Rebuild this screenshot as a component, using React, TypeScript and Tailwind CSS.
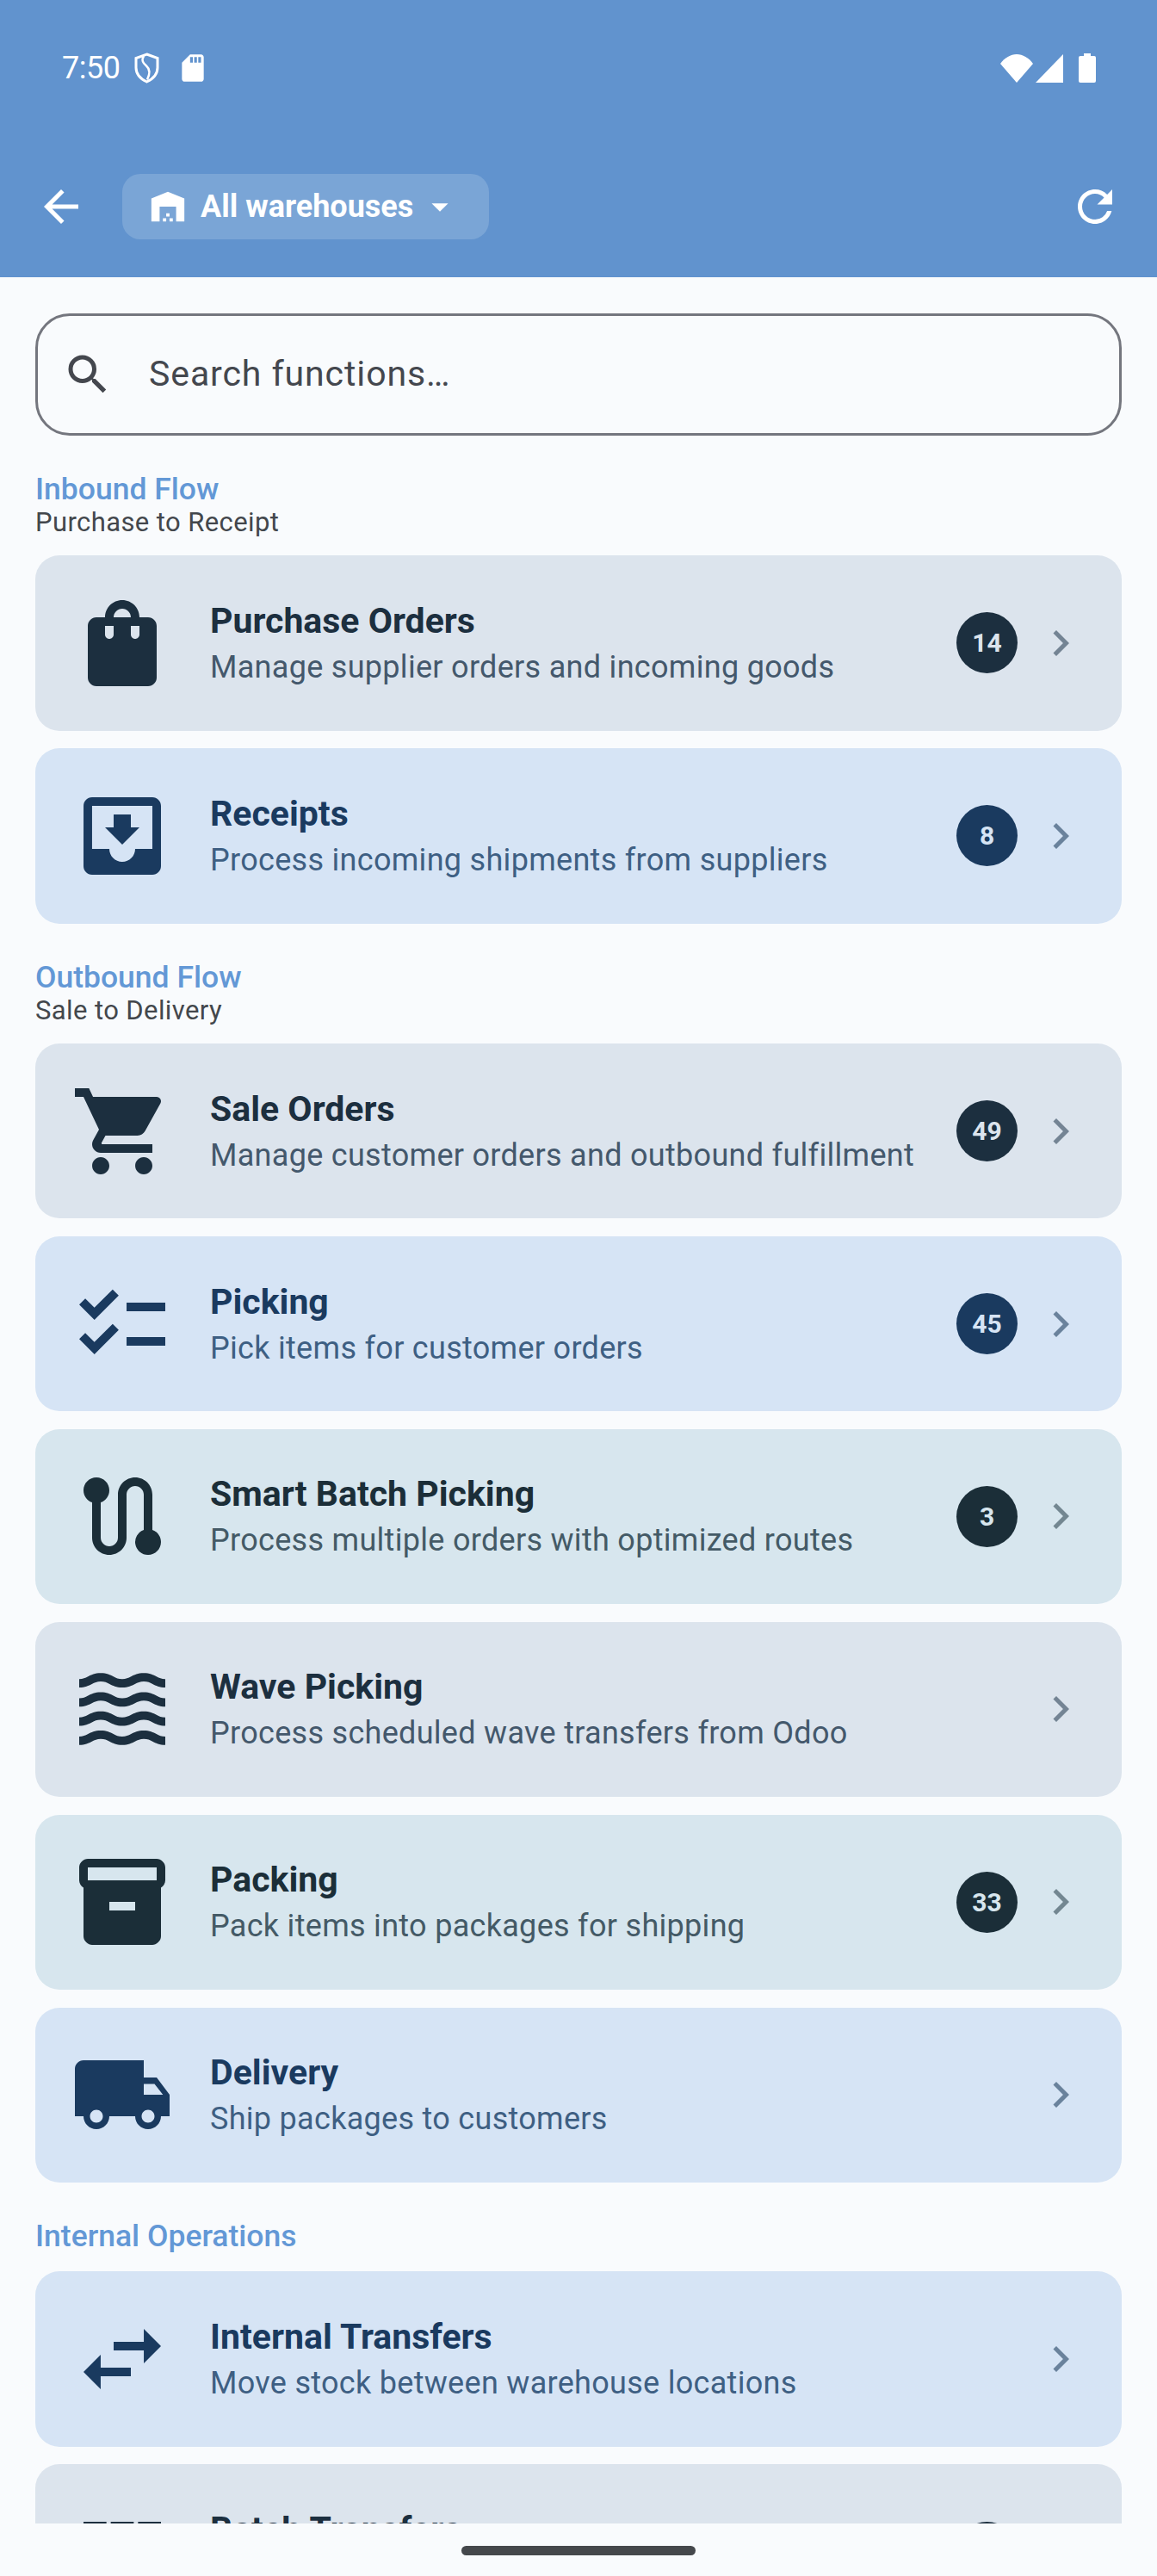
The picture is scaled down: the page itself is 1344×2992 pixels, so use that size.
import type { ComponentType } from 'react';
import {
  MdArrowBack,
  MdArrowDropDown,
  MdChecklist,
  MdChevronRight,
  MdInventory2,
  MdLocalShipping,
  MdMoveToInbox,
  MdRefresh,
  MdRoute,
  MdSdCard,
  MdSearch,
  MdShoppingBag,
  MdShoppingCart,
  MdSwapHoriz,
  MdWarehouse,
  MdWaves,
} from 'react-icons/md';

type IconType = ComponentType<{ className?: string }>;
type Tone = 'gray' | 'blue' | 'teal';

const tones: Record<Tone, { card: string; title: string; sub: string; chevron: string; badge: string; badgeText: string }> = {
  gray: {
    card: 'bg-[#dce4ed]',
    title: 'text-[#1c2f3f]',
    sub: 'text-[#44586c]',
    chevron: 'text-[#748494]',
    badge: 'bg-[#1c2f3f]',
    badgeText: 'text-[#dce4ed]',
  },
  blue: {
    card: 'bg-[#d6e4f5]',
    title: 'text-[#1a3a5f]',
    sub: 'text-[#3e5f83]',
    chevron: 'text-[#6a829c]',
    badge: 'bg-[#1a3a5f]',
    badgeText: 'text-[#d6e4f5]',
  },
  teal: {
    card: 'bg-[#d7e6ee]',
    title: 'text-[#1b2e38]',
    sub: 'text-[#445a66]',
    chevron: 'text-[#738791]',
    badge: 'bg-[#1b2e38]',
    badgeText: 'text-[#d7e6ee]',
  },
};

function ViewModuleIcon({ className }: { className?: string }) {
  return (
    <svg viewBox="0 0 24 24" fill="currentColor" className={className}>
      <path d="M14.67 5v6.5H9.33V5h5.34zm1 6.5H21V5h-5.33v6.5zm-7.34 0V5H3v6.5h5.33zm1 7.5h5.34v-6.5H9.33V19zm6.34 0H21v-6.5h-5.33V19zM3 12.5V19h5.33v-6.5H3z" />
    </svg>
  );
}

function StatusBar() {
  return (
    <div className="h-[158px] flex items-center justify-between pl-[72px] pr-[71px] text-white">
      <div className="flex items-center">
        <span className="text-[36px] font-normal leading-none tracking-[-0.5px]">7:50</span>
        <svg viewBox="0 0 29 36" className="w-[29px] h-[36px] ml-[17px]" fill="none" stroke="currentColor" strokeWidth="3">
          <path d="M14.5 2 27 6.5v11c0 7.5-5 13-12.5 16.500C7 30.500 2 25 2 17.500v-11L14.500 2Z" />
          <path d="M11 4c-3 5-1 8 3 11.500s5 8 1 16" strokeWidth="2.500" />
        </svg>
        <MdSdCard className="w-[38px] h-[38px] ml-[20px]" />
      </div>
      <div className="flex items-center">
        <svg viewBox="0 0 38 33" className="w-[38px] h-[33px]" fill="currentColor">
          <path d="M19 33 0 11C5 4 12 0 19 0s14 4 19 11L19 33Z" />
        </svg>
        <svg viewBox="0 0 32 33" className="w-[32px] h-[33px] ml-[3px]" fill="currentColor">
          <path d="M32 0v33H0L32 0Z" />
        </svg>
        <svg viewBox="0 0 20 34" className="w-[20px] h-[34px] ml-[18px]" fill="currentColor">
          <path d="M6 0h8v3h4a2 2 0 0 1 2 2v27a2 2 0 0 1-2 2H2a2 2 0 0 1-2-2V5a2 2 0 0 1 2-2h4V0Z" />
        </svg>
      </div>
    </div>
  );
}

function AppBar() {
  return (
    <div className="h-[164px] flex items-center pl-[42px] pr-[42px] text-white">
      <MdArrowBack className="w-[60px] h-[60px] -ml-[1px]" />
      <div className="ml-[41px] h-[76px] w-[426px] rounded-[21px] bg-[#7aa5d6] flex items-center pl-[30px]">
        <MdWarehouse className="w-[46px] h-[46px]" />
        <span className="ml-[15px] text-[36px] font-bold leading-none">All warehouses</span>
        <MdArrowDropDown className="ml-[8px] w-[46px] h-[46px]" />
      </div>
      <MdRefresh className="ml-auto w-[60px] h-[60px]" />
    </div>
  );
}

function FunctionCard({
  icon: Icon,
  title,
  subtitle,
  count,
  tone,
}: {
  icon: IconType;
  title: string;
  subtitle: string;
  count?: number;
  tone: Tone;
}) {
  const t = tones[tone];
  return (
    <div className={`h-[203.7px] shrink-0 rounded-[28px] flex items-center pl-[41px] pr-[41px] ${t.card}`}>
      <Icon className={`w-[120px] h-[120px] shrink-0 ${t.title}`} />
      <div className="ml-[42px] flex-1 min-w-0">
        <div className={`text-[41px] font-bold leading-[52px] ${t.title}`}>{title}</div>
        <div className={`text-[36px] leading-[48px] tracking-[0.3px] [font-variant-ligatures:common-ligatures] mt-[4px] ${t.sub}`}>{subtitle}</div>
      </div>
      {count !== undefined && (
        <div className={`w-[71px] h-[71px] rounded-full flex items-center justify-center text-[30px] font-bold ${t.badge} ${t.badgeText}`}>
          {count}
        </div>
      )}
      <MdChevronRight className={`w-[60px] h-[60px] ml-[20px] shrink-0 ${t.chevron}`} />
    </div>
  );
}

function SectionHeader({ title, subtitle }: { title: string; subtitle?: string }) {
  return (
    <div className="mt-[41px] mb-[20px]">
      <div className="text-[35.5px] font-medium leading-[42px] text-[#6398d6]">{title}</div>
      {subtitle && <div className="text-[31px] leading-[36px] tracking-[0.4px] text-[#43474c]">{subtitle}</div>}
    </div>
  );
}

export default function App() {
  return (
    <div className="w-[1344px] h-[2992px] bg-[#f9fbfd] flex flex-col font-[Roboto,sans-serif] overflow-hidden">
      <header className="h-[322px] shrink-0 bg-[#6193ce]">
        <StatusBar />
        <AppBar />
      </header>

      <main className="flex-1 min-h-0 overflow-hidden px-[41px] pt-[42px]">
        <div className="h-[142px] rounded-[40px] border-[3px] border-[#74767e] flex items-center pl-[28px]">
          <MdSearch className="w-[60px] h-[60px] text-[#44474e]" />
          <span className="ml-[41px] text-[41px] tracking-[0.9px] text-[#44474e]">Search functions…</span>
        </div>

        <SectionHeader title="Inbound Flow" subtitle="Purchase to Receipt" />
        <div className="flex flex-col gap-[20.3px]">
          <FunctionCard icon={MdShoppingBag} tone="gray" title="Purchase Orders" subtitle="Manage supplier orders and incoming goods" count={14} />
          <FunctionCard icon={MdMoveToInbox} tone="blue" title="Receipts" subtitle="Process incoming shipments from suppliers" count={8} />
        </div>

        <SectionHeader title="Outbound Flow" subtitle="Sale to Delivery" />
        <div className="flex flex-col gap-[20.3px]">
          <FunctionCard icon={MdShoppingCart} tone="gray" title="Sale Orders" subtitle="Manage customer orders and outbound fulfillment" count={49} />
          <FunctionCard icon={MdChecklist} tone="blue" title="Picking" subtitle="Pick items for customer orders" count={45} />
          <FunctionCard icon={MdRoute} tone="teal" title="Smart Batch Picking" subtitle="Process multiple orders with optimized routes" count={3} />
          <FunctionCard icon={MdWaves} tone="gray" title="Wave Picking" subtitle="Process scheduled wave transfers from Odoo" />
          <FunctionCard icon={MdInventory2} tone="teal" title="Packing" subtitle="Pack items into packages for shipping" count={33} />
          <FunctionCard icon={MdLocalShipping} tone="blue" title="Delivery" subtitle="Ship packages to customers" />
        </div>

        <SectionHeader title="Internal Operations" />
        <div className="flex flex-col gap-[20.3px]">
          <FunctionCard icon={MdSwapHoriz} tone="blue" title="Internal Transfers" subtitle="Move stock between warehouse locations" />
          <FunctionCard icon={ViewModuleIcon} tone="gray" title="Batch Transfers" subtitle="Process grouped transfers together" count={2} />
        </div>
      </main>

      <footer className="h-[61px] shrink-0 flex justify-center pt-[26px]">
        <div className="w-[272px] h-[11px] rounded-full bg-[#45484c]" />
      </footer>
    </div>
  );
}
